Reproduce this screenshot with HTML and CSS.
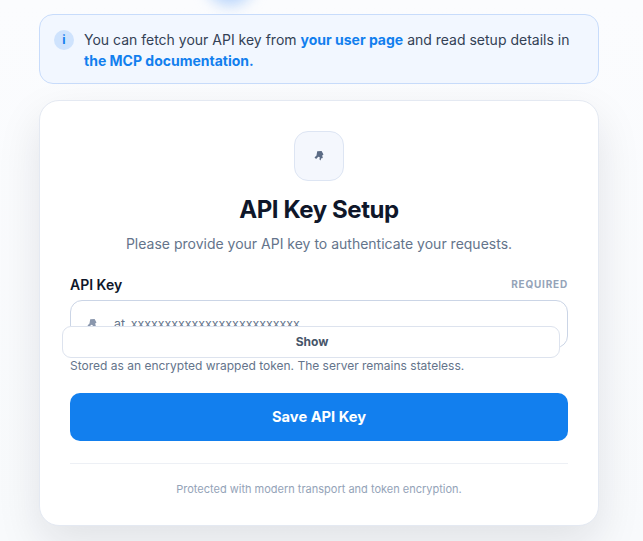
FILE: index.html
```html
<!DOCTYPE html>
<html lang="en">
<head>
    <meta charset="UTF-8">
    <meta name="viewport" content="width=device-width, initial-scale=1.0">
    <title>API Key Setup</title>
    <link rel="stylesheet" href="styles.css">
</head>
<body>
    <div class="glow"></div>
    <main class="container">
        <div class="notice">
            <span class="notice-icon">i</span>
            <p>You can fetch your API key from <a href="#">your user page</a> and read setup details in <a href="#">the MCP documentation.</a></p>
        </div>

        <section class="card">
            <div class="logo">
                <svg width="12" height="12" viewBox="0 0 12 12"><path class="key" d="M4.2 1.2 8.6 1l1.9 3.4-1.3 1.2.6 2.4-1.8.4-.3 2-1.2-.9.3-2.3-1.5-.5-2.2 2.3L1.5 7.5l2-1.9z"/></svg>
            </div>
            <h1>API Key Setup</h1>
            <p class="subtitle">Please provide your API key to authenticate your requests.</p>

            <form>
                <div class="label-row">
                    <label for="apiKey">API Key</label>
                    <span class="required">REQUIRED</span>
                </div>
                <div class="input-wrap">
                    <svg class="input-icon" width="12" height="12" viewBox="0 0 12 12"><path class="key-light" d="M4.2 1.2 8.6 1l1.9 3.4-1.3 1.2.6 2.4-1.8.4-.3 2-1.2-.9.3-2.3-1.5-.5-2.2 2.3L1.5 7.5l2-1.9z"/></svg>
                    <input type="text" id="apiKey" placeholder="at_xxxxxxxxxxxxxxxxxxxxxxxxx">
                    <button type="button" class="show-btn">Show</button>
                </div>
                <p class="hint">Stored as an encrypted wrapped token. The server remains stateless.</p>
                <button type="submit" class="save-btn">Save API Key</button>
            </form>

            <p class="footer-note">Protected with modern transport and token encryption.</p>
        </section>
    </main>
</body>
</html>
```

FILE: styles.css
```css
* {
    box-sizing: border-box;
}
html, body {
    height: 100%;
}
body {
    margin: 0;
    overflow: hidden;
    position: relative;
    background: linear-gradient(180deg, #fbfcfe 0%, #f8fafc 100%);
    font-family: Inter, "Liberation Sans", sans-serif;
    color: #0f172a;
}
.glow {
    position: absolute;
    left: 206px;
    top: -42px;
    width: 48px;
    height: 48px;
    border-radius: 50%;
    background: #bcd7fb;
    filter: blur(7px);
}
.container {
    position: relative;
    width: 560px;
    margin-left: 39px;
    padding-top: 14px;
}
.notice {
    display: flex;
    gap: 10px;
    height: 70px;
    padding: 14px 14px 0;
    border: 1px solid #c8dcfb;
    border-radius: 14px;
    background: #f2f7ff;
}
.notice-icon {
    flex: none;
    width: 20px;
    height: 20px;
    margin-top: 1px;
    border-radius: 50%;
    background: #cfe3fd;
    color: #127fee;
    font-size: 12px;
    font-weight: 700;
    line-height: 20px;
    text-align: center;
}
.notice p {
    margin: 0;
    font-size: 14px;
    line-height: 21px;
    color: #334155;
}
.notice a {
    color: #127fee;
    font-weight: 700;
    text-decoration: none;
}
.card {
    height: 426px;
    margin-top: 16px;
    padding: 30px 30px 0;
    border: 1px solid #e4e9f2;
    border-radius: 20px;
    background: #fff;
    box-shadow: 0 18px 44px rgba(15, 23, 42, 0.1);
}
.logo {
    display: flex;
    align-items: center;
    justify-content: center;
    width: 50px;
    height: 50px;
    margin: 0 auto;
    border: 1px solid #dde5f3;
    border-radius: 14px;
    background: #f4f7fd;
}
.key {
    fill: #5b6b85;
}
.key-light {
    fill: #8a97ad;
}
h1 {
    margin: 14px 0 0;
    font-size: 24px;
    line-height: 30px;
    font-weight: 700;
    letter-spacing: -0.43px;
    text-align: center;
}
.subtitle {
    margin: 9px 0 0;
    font-size: 14px;
    line-height: 20px;
    color: #64748b;
    text-align: center;
}
form {
    margin-top: 20px;
}
.label-row {
    display: flex;
    justify-content: space-between;
    align-items: center;
    height: 20px;
}
label {
    font-size: 14px;
    font-weight: 600;
}
.required {
    font-size: 10px;
    font-weight: 700;
    letter-spacing: 0.8px;
    color: #94a3b8;
}
.input-wrap {
    position: relative;
    margin-top: 6px;
    height: 48px;
}
.input-icon {
    position: absolute;
    left: 16px;
    top: 18px;
}
input[type="text"] {
    width: 100%;
    height: 48px;
    padding: 0 0 2px 43px;
    border: 1px solid #cbd5e6;
    border-radius: 12px;
    background: #fff;
    font-family: inherit;
    font-size: 12.4px;
}
input::placeholder {
    color: #64748b;
    opacity: 1;
}
.show-btn {
    position: absolute;
    left: -8px;
    top: 26px;
    width: 100%;
    height: 32px;
    padding: 0 6px 2px 8px;
    border: 1px solid #dde3ee;
    border-radius: 9px;
    background: #fff;
    color: #475569;
    font-family: inherit;
    font-size: 12px;
    font-weight: 700;
}
.hint {
    margin: 10px 0 0;
    font-size: 12px;
    line-height: 16px;
    color: #64748b;
}
.save-btn {
    display: block;
    width: 100%;
    height: 48px;
    margin-top: 19px;
    border: none;
    border-radius: 10px;
    background-color: #127fee;
    color: white;
    font-family: inherit;
    font-size: 14.7px;
    font-weight: 700;
}
.footer-note {
    margin: 22px 0 0;
    padding-top: 17px;
    border-top: 1px solid #edf0f5;
    font-size: 11px;
    line-height: 16px;
    color: #94a3b8;
    text-align: center;
}
```
